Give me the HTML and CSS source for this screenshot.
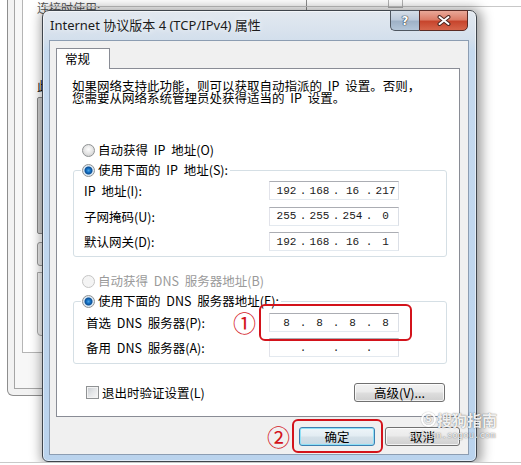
FILE: index.html
```html
<!DOCTYPE html>
<html lang="zh-CN">
<head>
  <meta charset="utf-8" />
  <title>Internet 协议版本 4 (TCP/IPv4) 属性</title>
  <link rel="stylesheet" href="styles.css">
</head>
<body>
  <div class="shot">
    <!-- adapter properties window left behind the dialog -->
    <div class="back-win">
      <div class="back-frame">
        <div class="back-pane">
          <p class="back-caption">连接时使用:</p>
          <p class="back-label">此</p>
          <div class="back-list"></div>
          <div class="back-btn"></div>
          <div class="back-box"></div>
        </div>
      </div>
    </div>
    <div class="back-rule"></div>
    <div class="back-caps"></div>

    <div class="dialog">
      <div class="titlebar">
        <span class="title">Internet 协议版本 4 (TCP/IPv4) 属性</span>
        <div class="caption-btns">
          <span class="cap cap-help">?</span>
          <span class="cap cap-close">
            <svg width="14" height="11" viewBox="0 0 14 11">
              <path d="M2.5 2 L11.5 9 M11.5 2 L2.5 9" stroke="#4b2620" stroke-width="4" stroke-linecap="round" fill="none"/>
              <path d="M2.5 2 L11.5 9 M11.5 2 L2.5 9" stroke="#fff" stroke-width="2" stroke-linecap="round" fill="none"/>
            </svg>
          </span>
        </div>
      </div>

      <div class="client">
        <div class="tabs"><span class="tab">常规</span></div>
        <div class="panel">
          <p class="intro">如果网络支持此功能，则可以获取自动指派的 IP 设置。否则，<br>您需要从网络系统管理员处获得适当的 IP 设置。</p>

          <div class="opt opt-first"><span class="radio"></span>自动获得 IP 地址(O)</div>
          <fieldset class="group group-ip">
            <legend><span class="opt"><span class="radio on"></span>使用下面的 IP 地址(S):</span></legend>
            <div class="rows">
              <div class="row">
                <span class="lbl">IP 地址(I):</span>
                <span class="ip"><span class="oct">192</span><span class="dot">.</span><span class="oct">168</span><span class="dot">.</span><span class="oct">16</span><span class="dot">.</span><span class="oct">217</span></span>
              </div>
              <div class="row">
                <span class="lbl">子网掩码(U):</span>
                <span class="ip"><span class="oct">255</span><span class="dot">.</span><span class="oct">255</span><span class="dot">.</span><span class="oct">254</span><span class="dot">.</span><span class="oct">0</span></span>
              </div>
              <div class="row">
                <span class="lbl">默认网关(D):</span>
                <span class="ip"><span class="oct">192</span><span class="dot">.</span><span class="oct">168</span><span class="dot">.</span><span class="oct">16</span><span class="dot">.</span><span class="oct">1</span></span>
              </div>
            </div>
          </fieldset>

          <div class="opt opt-dns disabled"><span class="radio off"></span>自动获得 DNS 服务器地址(B)</div>
          <fieldset class="group group-dns">
            <legend><span class="opt"><span class="radio on"></span>使用下面的 DNS 服务器地址(E):</span></legend>
            <div class="rows">
              <div class="row">
                <span class="lbl">首选 DNS 服务器(P):</span>
                <span class="field-wrap">
                  <span class="mark mark-1">①</span>
                  <span class="hl hl-dns"></span>
                  <span class="ip"><span class="oct">8</span><span class="dot">.</span><span class="oct">8</span><span class="dot">.</span><span class="oct">8</span><span class="dot">.</span><span class="oct">8</span></span>
                </span>
              </div>
              <div class="row">
                <span class="lbl">备用 DNS 服务器(A):</span>
                <span class="ip"><span class="oct"></span><span class="dot">.</span><span class="oct"></span><span class="dot">.</span><span class="oct"></span><span class="dot">.</span><span class="oct"></span></span>
              </div>
            </div>
          </fieldset>

          <div class="foot">
            <span class="check"></span>
            <span class="check-text">退出时验证设置(L)</span>
            <button type="button" class="btn btn-adv">高级(V)...</button>
          </div>
        </div>

        <div class="actions">
          <span class="field-wrap">
            <span class="mark mark-2">②</span>
            <span class="hl hl-ok"></span>
            <button type="button" class="btn btn-default">确定</button>
          </span>
          <button type="button" class="btn">取消</button>
        </div>
      </div>
    </div>

    <div class="watermark">
      <div class="wm-brand"><span class="wm-logo">S</span>搜狗指南</div>
      <div class="wm-url">zhinan.sogou.com</div>
    </div>
  </div>
</body>
</html>
```

FILE: styles.css
```css
body {
  margin: 0;
  background-color: #fff;
  font-family: "Noto Sans CJK SC", sans-serif;
  color: #000;
}
.shot {
  position: relative;
  height: 462px;
  overflow: hidden;
  border-bottom: 1px solid #c9c9c9;
}

/* window behind */
.back-win {
  position: absolute;
  left: 7px;
  top: -1px;
  width: 300px;
  height: 397px;
  box-sizing: border-box;
  padding: 0 0 6px 6px;
  border: 1px solid #8e8e8e;
  border-top: none;
  border-radius: 0 0 0 6px;
  background-color: #f2f2f2;
}
.back-frame {
  height: 100%;
  box-sizing: border-box;
  padding: 0 0 35px 7px;
  border-left: 1px solid #a5a5a5;
  border-bottom: 1px solid #a5a5a5;
  background-color: #f7f7f7;
}
.back-pane {
  height: 100%;
  box-sizing: border-box;
  padding-left: 14px;
  border-left: 1px solid #b5b5b5;
  border-bottom: 1px solid #b5b5b5;
  background-color: #fff;
}
.back-caption {
  margin: 0;
  padding-top: 2px;
  font-size: 12px;
  line-height: 14px;
  color: #555;
}
.back-label {
  margin: 64px 0 0;
  font-size: 12px;
  line-height: 14px;
}
.back-list {
  margin-top: 4px;
  height: 135px;
  border: 1px solid #8a8a8a;
  border-radius: 2px;
  background-color: #d2d2d2;
}
.back-btn {
  margin-top: 8px;
  height: 22px;
  border: 1px solid #9a9a9a;
  border-radius: 3px;
  background-color: #ececec;
}
.back-box {
  margin-top: 6px;
  height: 62px;
  border: 1px solid #ababab;
  border-radius: 0 0 0 4px;
  background-color: #f5f5f5;
}
.back-rule {
  position: absolute;
  left: 43px;
  right: 0;
  top: 6px;
  height: 1px;
  background-color: #c8c8c8;
}
.back-caps {
  position: absolute;
  left: 388px;
  top: -1px;
  width: 13px;
  height: 7px;
  border: 1px solid #b4b4b4;
}

/* dialog */
.dialog {
  position: absolute;
  left: 42px;
  top: 10px;
  width: 435px;
  height: 452px;
  box-sizing: border-box;
  padding: 0 7px 6px 6px;
  border: 1px solid #3f454c;
  border-radius: 7px 7px 6px 6px;
  background: linear-gradient(to bottom, #e3e9f0 0, #d3dfec 29px, #c6daef 40px, #bad3ed 100%);
  box-shadow: 2px 1px 12px 3px rgba(0, 0, 0, 0.38), inset 0 0 0 1px rgba(255, 255, 255, 0.55);
}
.titlebar {
  display: flex;
  height: 29px;
  margin-left: 1px;
}
.title {
  font-family: "Noto Sans", "Noto Sans CJK SC", sans-serif;
  font-size: 13px;
  line-height: 29px;
  color: #1b1b1b;
  text-shadow: 0 0 6px rgba(255, 255, 255, 0.9);
}
.caption-btns {
  display: flex;
  margin: -1px 1px 0 auto;
  height: 21px;
}
.cap {
  display: flex;
  align-items: center;
  justify-content: center;
  box-sizing: border-box;
  height: 21px;
  border: 1px solid #4e5660;
}
.cap-help {
  width: 29px;
  border-right: none;
  border-radius: 0 0 0 5px;
  background: linear-gradient(to bottom, #d5dee8 0, #bccadb 45%, #9fb2c7 55%, #b3c5d8 100%);
  font-family: "DejaVu Sans", sans-serif;
  font-weight: bold;
  font-size: 12px;
  color: #fff;
  text-shadow: 0 0 1px #2d3640, 0 0 1px #2d3640, 0 0 1px #2d3640;
}
.cap-close {
  width: 49px;
  border-color: #5a2a24;
  border-radius: 0 0 5px 0;
  background: linear-gradient(to bottom, #e9a898 0, #dc7d68 45%, #c7452d 55%, #d6654b 100%);
}

.client {
  height: 415px;
  box-sizing: border-box;
  padding: 7px 8px 0 6px;
  border: 1px solid #8c9db2;
  background-color: #f0f0f0;
}
.tabs {
  display: flex;
  height: 20px;
}
.tab {
  position: relative;
  z-index: 1;
  width: 54px;
  height: 21px;
  box-sizing: border-box;
  padding-left: 8px;
  border: 1px solid #898c95;
  border-bottom: none;
  background-color: #fff;
  font-size: 12.5px;
  line-height: 20px;
}
.panel {
  height: 349px;
  box-sizing: border-box;
  border: 1px solid #898c95;
  background-color: #fff;
  font-size: 12.5px;
  word-spacing: 3px;
}
.intro {
  margin: 11px 0 0 15px;
  line-height: 12px;
}

.opt {
  display: flex;
  align-items: center;
  gap: 3px;
  height: 16px;
  line-height: 16px;
  white-space: nowrap;
}
.opt-first {
  margin: 38px 0 0 25px;
}
.opt-dns {
  margin: 16px 0 0 25px;
}
.disabled {
  color: #9a9a9a;
}
.radio {
  width: 13px;
  height: 13px;
  box-sizing: border-box;
  border: 1px solid #8f9294;
  border-radius: 50%;
  background: radial-gradient(circle at 50% 40%, #fdfdfd 0, #e6e6e6 4px, #d2d2d2 7px);
}
.radio.on {
  background: radial-gradient(circle at 50% 50%, #4aa3e6 0, #1470c2 2px, #0d4f95 3.5px, #d6e7f5 4.5px, #e9e9e9 6.5px);
}
.radio.off {
  border-color: #c5c5c5;
  background: #f4f4f4;
}

.group {
  margin: 4px 12px 0 16px;
  padding: 0;
  min-inline-size: 0;
  border: 1px solid #d5dfe5;
  border-radius: 3px;
}
.group legend {
  margin-left: 7px;
  padding: 0 2px 0 1px;
}
.rows {
  display: flex;
  flex-direction: column;
  padding: 3px 0 5px 10px;
}
.group-ip .rows {
  gap: 6.5px;
}
.group-dns .rows {
  gap: 6px;
  padding: 4px 0 6px 12px;
}
.row {
  display: flex;
  align-items: center;
  height: 19px;
}
.lbl {
  width: 185px;
  white-space: nowrap;
}
.group-dns .lbl {
  width: 183px;
}
.ip {
  display: flex;
  align-items: center;
  width: 130px;
  height: 19px;
  box-sizing: border-box;
  padding-left: 4px;
  border: 1px solid;
  border-color: #abadb3 #dbdfe6 #e3e9ef #e2e3ea;
  background-color: #fff;
  font-family: "Liberation Mono", monospace;
  font-size: 11px;
  word-spacing: 0;
  color: #1a1a1a;
}
.oct {
  width: 25px;
  text-align: center;
}
.dot {
  width: 8px;
  text-align: center;
}

/* red annotations */
.field-wrap {
  position: relative;
  display: flex;
}
.hl {
  position: absolute;
  box-sizing: border-box;
  border: 2px solid #d3131b;
  border-radius: 6px;
}
.hl-dns {
  left: -10px;
  top: -9px;
  width: 153px;
  height: 37px;
}
.hl-ok {
  left: -7px;
  top: -8px;
  width: 91px;
  height: 34px;
}
.mark {
  position: absolute;
  font-size: 23px;
  line-height: 23px;
  color: #d3131b;
}
.mark-1 {
  left: -36px;
  top: -2px;
}
.mark-2 {
  left: -32px;
  top: -2px;
}

.foot {
  display: flex;
  align-items: center;
  height: 19px;
  margin: 19px 14px 0 29px;
}
.check {
  width: 13px;
  height: 13px;
  box-sizing: border-box;
  border: 1px solid #8f9294;
  background: linear-gradient(135deg, #c6cacf 0, #e4e6e8 50%, #f8f8f8 100%);
  box-shadow: inset 0 0 0 1px #f3f3f3;
}
.check-text {
  margin-left: 3px;
}
.btn {
  height: 19px;
  padding: 0;
  border: 1px solid #707070;
  border-radius: 3px;
  background: linear-gradient(to bottom, #f2f2f2 0, #ebebeb 45%, #dddddd 55%, #cfcfcf 100%);
  box-shadow: inset 0 0 0 1px rgba(255, 255, 255, 0.75);
  font-family: "Noto Sans CJK SC", sans-serif;
  font-size: 12.5px;
  color: #000;
  line-height: 17px;
}
.btn-adv {
  width: 91px;
  margin-left: auto;
  word-spacing: 0;
}
.actions {
  display: flex;
  justify-content: flex-end;
  gap: 10px;
  margin-top: 10px;
}
.actions .btn {
  width: 76px;
}
.actions .field-wrap + .btn {
  width: 75px;
}
.btn-default {
  border-color: #3c7fb1;
  background: linear-gradient(to bottom, #eef5f9 0, #e3edf3 45%, #d3e0e8 55%, #c8d8e3 100%);
  box-shadow: inset 0 0 0 1px #8fe0f6;
}

/* watermark */
.watermark {
  position: absolute;
  left: 421px;
  top: 410px;
  color: rgba(255, 255, 255, 0.92);
  text-shadow: 0 0 1px rgba(0, 0, 0, 0.5), 0 0 2px rgba(0, 0, 0, 0.25);
}
.wm-brand {
  display: flex;
  align-items: center;
  gap: 1px;
  font-size: 15px;
  font-weight: 700;
  line-height: 19px;
}
.wm-logo {
  display: flex;
  align-items: center;
  justify-content: center;
  width: 15px;
  height: 15px;
  box-sizing: border-box;
  border: 2px solid rgba(255, 255, 255, 0.92);
  border-radius: 50%;
  box-shadow: 0 0 1px rgba(0, 0, 0, 0.5), inset 0 0 1px rgba(0, 0, 0, 0.5);
  font-family: "DejaVu Sans", sans-serif;
  font-size: 9px;
}
.wm-url {
  margin: 2px 0 0 -12px;
  font-family: "DejaVu Sans Mono", monospace;
  font-size: 9px;
  line-height: 9px;
}
```
